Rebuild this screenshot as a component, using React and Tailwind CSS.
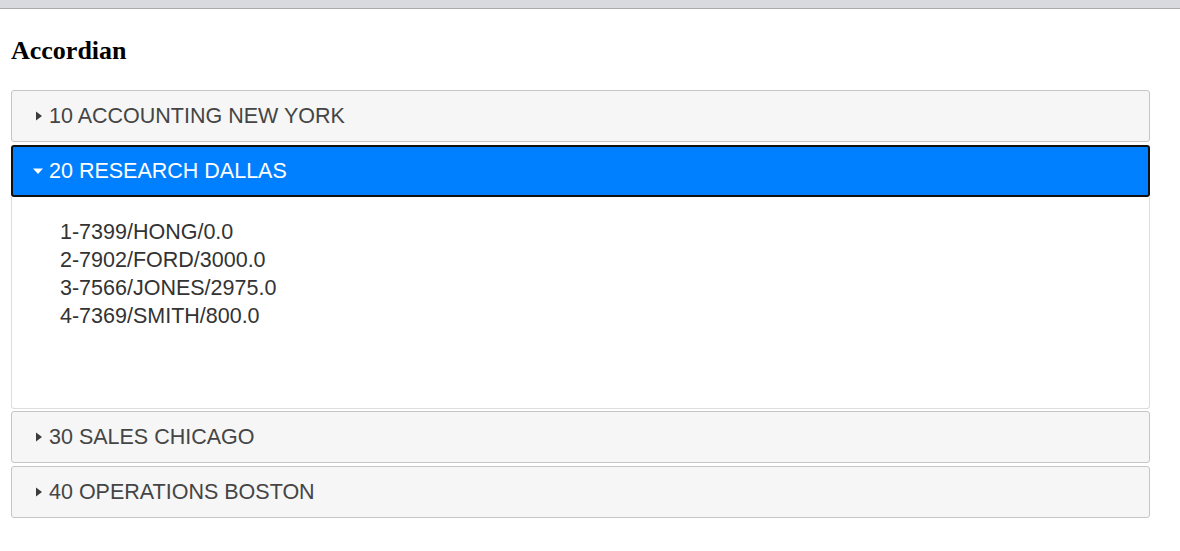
import React from "react";

function TriRight() {
  return (
    <svg width="6" height="10" viewBox="0 0 6 10" className="shrink-0">
      <polygon points="0,0.5 6,5 0,9.5" fill="#3c3c3c" />
    </svg>
  );
}
function TriDown() {
  return (
    <svg width="10" height="6" viewBox="0 0 10 6" className="shrink-0">
      <polygon points="0,0.5 10,0.5 5,6" fill="#ffffff" />
    </svg>
  );
}

function Header({ label, className = "" }) {
  return (
    <div
      className={
        "h-[52px] flex items-center pl-[24px] gap-[7px] bg-[#f6f6f6] border border-[#c5c5c5] rounded-[3px] text-[21.5px] text-[#454545] " +
        className
      }
    >
      <TriRight />
      <span>{label}</span>
    </div>
  );
}

export default function App() {
  return (
    <div
      className="min-h-[551px] bg-white"
      style={{ fontFamily: '"Liberation Sans", Arial, sans-serif' }}
    >
      <div className="h-[9px] bg-[#d9dadf] border-b border-[#a9a9a9]" />
      <div className="pl-[11px] w-[1150px]">
        <h2
          className="mt-[27px] text-[26px] font-bold text-black leading-[30px]"
          style={{ fontFamily: '"Liberation Serif", "Times New Roman", serif' }}
        >
          Accordian
        </h2>
        <div className="mt-[24px]">
          <Header label="10 ACCOUNTING NEW YORK" />
          <div className="mt-[3px] h-[52px] flex items-center pl-[20px] gap-[6px] bg-[#007fff] border-2 border-[#111111] rounded-[3px] text-[21.5px] text-white">
            <TriDown />
            <span>20 RESEARCH DALLAS</span>
          </div>
          <div className="h-[212px] border border-t-0 border-[#dddddd] rounded-b-[3px] bg-white pl-[48px] pt-[21px] text-[21.5px] leading-[28px] text-[#333333]">
            <div>1-7399/HONG/0.0</div>
            <div>2-7902/FORD/3000.0</div>
            <div>3-7566/JONES/2975.0</div>
            <div>4-7369/SMITH/800.0</div>
          </div>
          <Header label="30 SALES CHICAGO" className="mt-[2px]" />
          <Header label="40 OPERATIONS BOSTON" className="mt-[3px]" />
        </div>
      </div>
    </div>
  );
}
